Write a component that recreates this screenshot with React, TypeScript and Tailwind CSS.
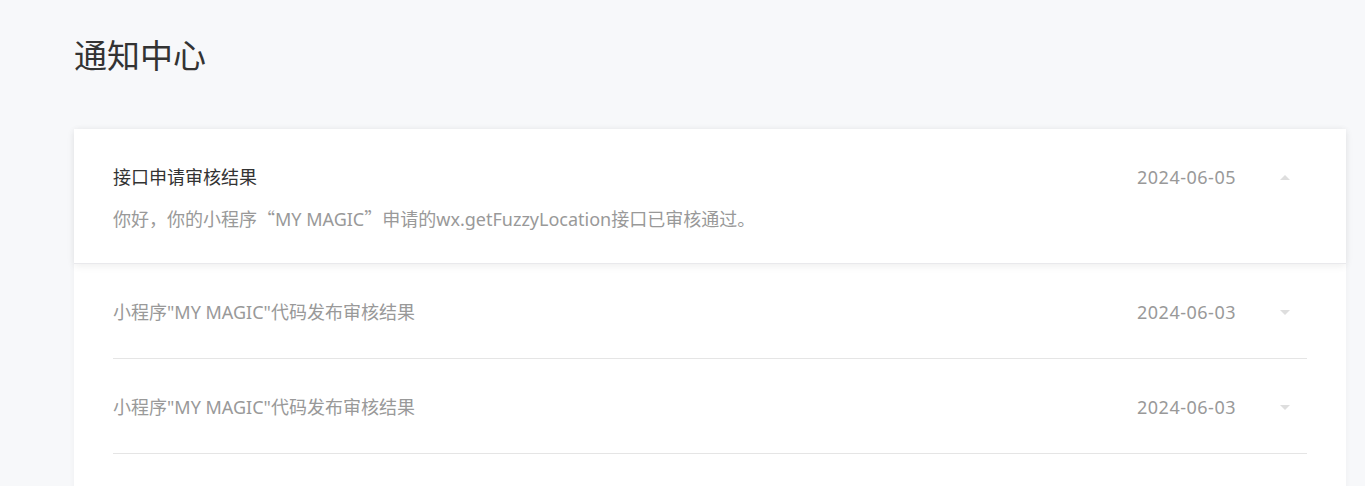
import React from "react";

const font = {
  fontFamily: '"Noto Sans", "Noto Sans CJK SC", sans-serif',
};

interface Notice {
  title: string;
  date: string;
  body?: React.ReactNode;
  open?: boolean;
}

// full-width quotes like the original CJK rendering
const Q = ({ c }: { c: string }) => (
  <span style={{ fontFamily: '"Noto Sans CJK SC", sans-serif' }}>{c}</span>
);

const notices: Notice[] = [
  {
    title: "接口申请审核结果",
    date: "2024-06-05",
    body: (
      <>
        你好，你的小程序<Q c="“" />MY MAGIC<Q c="”" />申请的wx.getFuzzyLocation接口已审核通过。
      </>
    ),
    open: true,
  },
  { title: '小程序"MY MAGIC"代码发布审核结果', date: "2024-06-03" },
  { title: '小程序"MY MAGIC"代码发布审核结果', date: "2024-06-03" },
];

function Caret({ up }: { up?: boolean }) {
  return (
    <svg width="10" height="5" viewBox="0 0 10 5" className="block">
      {up ? (
        <path d="M0 5 L5 0 L10 5 Z" fill="#dedede" />
      ) : (
        <path d="M0 0 L5 5 L10 0 Z" fill="#dedede" />
      )}
    </svg>
  );
}

function Row({ item }: { item: Notice }) {
  const head = (
    <div className="flex items-center leading-[24px]">
      <div className={`flex-1 text-[18px] ${item.open ? "text-[#333]" : "text-[#999]"}`}>
        {item.title}
      </div>
      <div className="text-[18px] tracking-[0.5px] text-[#999]">{item.date}</div>
      <div className="ml-[44px] mr-[17px]">
        <Caret up={item.open} />
      </div>
    </div>
  );

  if (item.open) {
    return (
      <div className="relative z-10 bg-white px-[39px] pt-[36px] pb-[32px] shadow-[0_2px_8px_rgba(0,0,0,0.07)] border-b border-[#e9e9ec]">
        {head}
        <div className="mt-[17px] text-[18px] leading-[24px] text-[#999]">{item.body}</div>
      </div>
    );
  }

  return (
    <div className="mx-[39px] pt-[36px] pb-[34px] border-b border-[#e5e5e5]">{head}</div>
  );
}

export default function App() {
  return (
    <div className="min-h-screen bg-[#f7f8fa]" style={font}>
      <div className="px-[74px] pt-[34px]">
        <h1 className="text-[33px] leading-[44px] text-[#333] font-normal">通知中心</h1>
        <div className="mt-[51px] mr-[-55px] bg-white shadow-[0_0_6px_rgba(0,0,0,0.04)] pb-[40px]">
          {notices.map((n, i) => (
            <Row key={i} item={n} />
          ))}
        </div>
      </div>
    </div>
  );
}
